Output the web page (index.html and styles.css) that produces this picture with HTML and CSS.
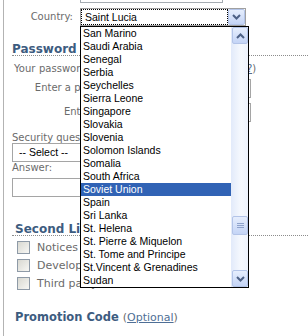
FILE: index.html
```html
<!DOCTYPE html>
<html>
<head>
<meta charset="utf-8">
<link rel="stylesheet" href="styles.css">
</head>
<body>
<div class="page">
  <div class="topinput"></div>
  <div class="country">
    <label class="lbl">Country:</label>
    <div class="combo">
      <span class="val">Saint Lucia</span>
      <span class="btn"><svg width="9" height="6" viewBox="0 0 9 6"><path d="M1 1 L4.5 4.5 L8 1" fill="none" stroke="#4d6185" stroke-width="2"/></svg></span>
      <div class="list">
        <ul class="opts">
          <li>San Marino</li>
          <li>Saudi Arabia</li>
          <li>Senegal</li>
          <li>Serbia</li>
          <li>Seychelles</li>
          <li>Sierra Leone</li>
          <li>Singapore</li>
          <li>Slovakia</li>
          <li>Slovenia</li>
          <li>Solomon Islands</li>
          <li>Somalia</li>
          <li>South Africa</li>
          <li class="sel">Soviet Union</li>
          <li>Spain</li>
          <li>Sri Lanka</li>
          <li>St. Helena</li>
          <li>St. Pierre &amp; Miquelon</li>
          <li>St. Tome and Principe</li>
          <li>St.Vincent &amp; Grenadines</li>
          <li>Sudan</li>
        </ul>
        <div class="sb">
          <span class="sbtn"><svg width="9" height="6" viewBox="0 0 9 6"><path d="M1 5 L4.5 1.5 L8 5" fill="none" stroke="#4d6185" stroke-width="2"/></svg></span>
          <span class="sbtn thumb"><svg width="7" height="7" viewBox="0 0 7 7"><path d="M0 1.5 H7 M0 3.5 H7 M0 5.5 H7" stroke="#8fa3cc" stroke-width="1"/></svg></span>
          <span class="sbtn"><svg width="9" height="6" viewBox="0 0 9 6"><path d="M1 1 L4.5 4.5 L8 1" fill="none" stroke="#4d6185" stroke-width="2"/></svg></span>
        </div>
      </div>
    </div>
  </div>

  <h2 class="sec">Password</h2>
  <p class="note">Your password must be 6-16 characters (<a href="#">what?</a>)</p>
  <div class="prow first"><label class="plbl">Enter a password:</label><span class="pinput"></span></div>
  <div class="prow"><label class="plbl">Enter again:</label><span class="pinput"></span></div>

  <label class="flbl first">Security question:</label>
  <div class="select2">-- Select --</div>
  <label class="flbl">Answer:</label>
  <div class="answer"></div>

  <h2 class="sec sec2">Second Line of Defense</h2>
  <ul class="checks">
    <li><span class="cb"></span>Notices about my account</li>
    <li><span class="cb"></span>Developer newsletter</li>
    <li><span class="cb"></span>Third party offers</li>
  </ul>

  <h2 class="promo">Promotion Code <span class="opt">(<a href="#">Optional</a>)</span></h2>
</div>
</body>
</html>
```

FILE: styles.css
```css
* { box-sizing: border-box; }
html, body { margin: 0; padding: 0; background: #fff; }
body {
  width: 308px;
  height: 336px;
  overflow: hidden;
  font-family: "DejaVu Sans", Verdana, sans-serif;
  font-size: 10px;
  color: #6b6b6b;
}
.page {
  display: flow-root;
  margin-left: 3px;
  border-left: 1px solid #b3b3b3;
  padding-left: 8px;
  height: 336px;
}
.topinput {
  margin-left: 68px;
  width: 143px;
  height: 3px;
  border: 1px solid #a5acb2;
  border-top: none;
}
.country {
  display: flex;
  align-items: center;
  margin-top: 5px;
  height: 18px;
}
.lbl {
  width: 61px;
  text-align: right;
  margin-right: 7px;
  line-height: 12px;
}
.combo {
  position: relative;
  display: flex;
  width: 166px;
  height: 18px;
  border: 1px solid #a0a0a0;
}
.val {
  flex: 1;
  height: 16px;
  border: 1px dotted #000;
  padding-left: 3px;
  font-family: "Liberation Sans", Arial, sans-serif;
  font-size: 10.5px;
  line-height: 14px;
  color: #000;
}
.btn, .sbtn {
  display: flex;
  align-items: center;
  justify-content: center;
  border: 1px solid #b3c4e8;
  border-radius: 2px;
  background: linear-gradient(#e6eefd, #c4d4f6);
}
.btn { width: 17px; height: 16px; }
.list {
  position: absolute;
  z-index: 2;
  left: -1px;
  top: calc(100% + 1px);
  width: 169px;
  height: 262px;
  border: 1px solid #000;
  background: #fff;
  display: flex;
}
.opts {
  list-style: none;
  margin: 0;
  padding: 0;
  width: 150px;
}
.opts li {
  height: 13px;
  line-height: 13px;
  padding-left: 2px;
  font-family: "Liberation Sans", Arial, sans-serif;
  font-size: 10.5px;
  color: #000;
  white-space: nowrap;
}
.opts li.sel { background: #3163b5; color: #fff; }
.sb {
  width: 17px;
  display: flex;
  flex-direction: column;
  background: linear-gradient(90deg, #e2eafa, #f6f9fe 60%, #eef3fd);
}
.sbtn { width: 16px; height: 17px; margin-left: 1px; }
.sb .thumb { margin-top: auto; margin-bottom: 35px; height: 19px; }
.sec {
  margin: 17px 0 0;
  font-size: 12px;
  font-weight: bold;
  line-height: 12px;
  color: #3d5c7f;
  border-bottom: 1px dotted #8c8c8c;
}
.note {
  margin: 7px 0 0 2px;
  line-height: 12px;
  white-space: nowrap;
  word-spacing: 0.5px;
}
a { color: #4f6f96; }
.prow {
  display: flex;
  align-items: center;
  height: 20px;
  margin-top: 4px;
}
.prow.first { margin-top: 3px; }
.plbl { width: 113px; text-align: right; white-space: nowrap; line-height: 12px; }
.pinput { width: 120px; height: 19px; margin-left: 6px; border: 1px solid #a5a5a5; }
.flbl { display: block; line-height: 11px; }
.flbl.first { margin-top: 10px; }
.select2 {
  width: 180px;
  height: 19px;
  border: 1px solid #a5a5a5;
  padding-left: 6px;
  font-family: "Liberation Sans", Arial, sans-serif;
  font-size: 10.5px;
  line-height: 17px;
  color: #000;
}
.answer {
  width: 180px;
  height: 19px;
  margin-top: 5px;
  border: 1px solid #a5a5a5;
}
.sec2 { margin-top: 26px; padding-left: 3px; }
.checks {
  list-style: none;
  margin: 2px 0 0;
  padding: 0 0 0 5px;
}
.checks li {
  display: flex;
  align-items: center;
  gap: 7px;
  height: 18px;
  font-size: 11px;
  line-height: 13px;
  white-space: nowrap;
}
.cb {
  width: 13px;
  height: 13px;
  border: 1px solid #8e9aa7;
  background: linear-gradient(135deg, #d8d8d1, #f7f7f4);
}
.promo {
  margin: 19px 0 0;
  padding-left: 3px;
  font-size: 11.5px;
  font-weight: bold;
  line-height: 12px;
  color: #3d5c7f;
}
.opt { font-weight: normal; font-size: 11px; color: #6b6b6b; }
```
